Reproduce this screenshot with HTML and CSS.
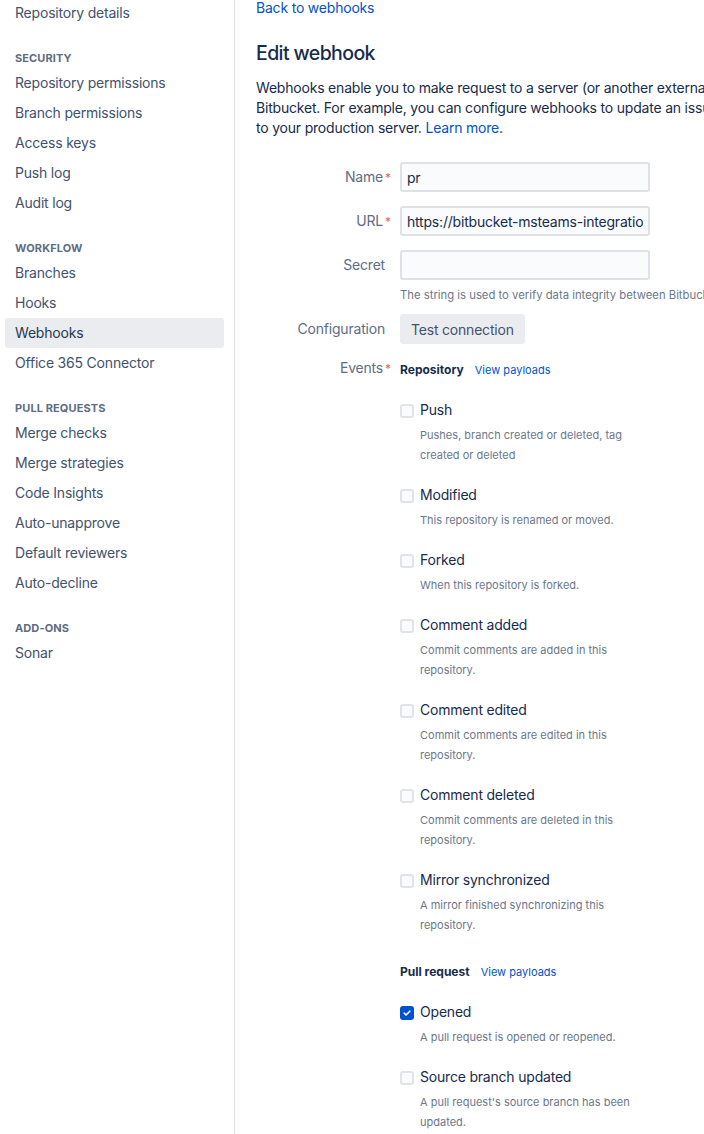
FILE: index.html
```html
<!DOCTYPE html>
<html lang="en">
<head>
<meta charset="utf-8">
<title>Edit webhook</title>
<link rel="stylesheet" href="styles.css">
</head>
<body>
<div class="page">
  <aside class="sidebar">
    <nav class="nav">
      <a class="nav-item">Repository details</a>
      <div class="nav-heading">Security</div>
      <a class="nav-item">Repository permissions</a>
      <a class="nav-item">Branch permissions</a>
      <a class="nav-item">Access keys</a>
      <a class="nav-item">Push log</a>
      <a class="nav-item">Audit log</a>
      <div class="nav-heading">Workflow</div>
      <a class="nav-item">Branches</a>
      <a class="nav-item">Hooks</a>
      <a class="nav-item is-active">Webhooks</a>
      <a class="nav-item">Office 365 Connector</a>
      <div class="nav-heading">Pull requests</div>
      <a class="nav-item">Merge checks</a>
      <a class="nav-item">Merge strategies</a>
      <a class="nav-item">Code Insights</a>
      <a class="nav-item">Auto-unapprove</a>
      <a class="nav-item">Default reviewers</a>
      <a class="nav-item">Auto-decline</a>
      <div class="nav-heading">Add-ons</div>
      <a class="nav-item">Sonar</a>
    </nav>
  </aside>
  <main class="main">
    <a class="back-link">Back to webhooks</a>
    <h1 class="title">Edit webhook</h1>
    <p class="intro">Webhooks enable you to make request to a server (or another external service) when certain events happen in<br>Bitbucket. For example, you can configure webhooks to update an issue tracker, trigger CI builds or deploy<br>to your production server. <a class="link">Learn more</a>.</p>

    <form class="form">
      <div class="row">
        <label class="row-label">Name<span class="req">*</span></label>
        <div class="row-field"><input class="text-input" type="text" value="pr"></div>
      </div>
      <div class="row">
        <label class="row-label">URL<span class="req">*</span></label>
        <div class="row-field"><input class="text-input" type="text" value="https://bitbucket-msteams-integration.example.com/webhook"></div>
      </div>
      <div class="row">
        <label class="row-label">Secret</label>
        <div class="row-field">
          <input class="text-input" type="text" value="">
          <div class="help">The string is used to verify data integrity between Bitbucket and your endpoint.</div>
        </div>
      </div>
      <div class="row row-config">
        <label class="row-label">Configuration</label>
        <div class="row-field"><button class="btn" type="button">Test connection</button></div>
      </div>
      <div class="row row-events">
        <label class="row-label">Events<span class="req">*</span></label>
        <div class="row-field">
          <div class="group">
            <div class="group-head"><span class="group-title">Repository</span><a class="payloads">View payloads</a></div>
            <div class="event">
              <div class="event-line"><span class="cb"></span><span class="event-name">Push</span></div>
              <div class="event-desc">Pushes, branch created or deleted, tag created or deleted</div>
            </div>
            <div class="event">
              <div class="event-line"><span class="cb"></span><span class="event-name">Modified</span></div>
              <div class="event-desc">This repository is renamed or moved.</div>
            </div>
            <div class="event">
              <div class="event-line"><span class="cb"></span><span class="event-name">Forked</span></div>
              <div class="event-desc">When this repository is forked.</div>
            </div>
            <div class="event">
              <div class="event-line"><span class="cb"></span><span class="event-name">Comment added</span></div>
              <div class="event-desc">Commit comments are added in this repository.</div>
            </div>
            <div class="event">
              <div class="event-line"><span class="cb"></span><span class="event-name">Comment edited</span></div>
              <div class="event-desc">Commit comments are edited in this repository.</div>
            </div>
            <div class="event">
              <div class="event-line"><span class="cb"></span><span class="event-name">Comment deleted</span></div>
              <div class="event-desc">Commit comments are deleted in this repository.</div>
            </div>
            <div class="event">
              <div class="event-line"><span class="cb"></span><span class="event-name">Mirror synchronized</span></div>
              <div class="event-desc">A mirror finished synchronizing this repository.</div>
            </div>
          </div>
          <div class="group group-pr">
            <div class="group-head"><span class="group-title">Pull request</span><a class="payloads">View payloads</a></div>
            <div class="event">
              <div class="event-line"><span class="cb is-checked"><svg viewBox="0 0 14 14" width="14" height="14"><path d="M4.2 7.2 L6.1 9 L9.8 5.2" fill="none" stroke="#fff" stroke-width="1.6" stroke-linecap="round" stroke-linejoin="round"/></svg></span><span class="event-name">Opened</span></div>
              <div class="event-desc">A pull request is opened or reopened.</div>
            </div>
            <div class="event">
              <div class="event-line"><span class="cb"></span><span class="event-name">Source branch updated</span></div>
              <div class="event-desc">A pull request's source branch has been updated.</div>
            </div>
          </div>
        </div>
      </div>
    </form>
  </main>
</div>
</body>
</html>
```

FILE: styles.css
```css
* { box-sizing: border-box; }

html, body {
  margin: 0;
  padding: 0;
  background: #fff;
  overflow: hidden;
}

body {
  font-family: Inter, "Noto Sans", "Liberation Sans", sans-serif;
  font-size: 14px;
  letter-spacing: -0.2px;
  color: #172B4D;
}

.page {
  display: flex;
  align-items: stretch;
  min-height: 1140px;
  margin-top: -2px;
}

.sidebar {
  flex: 0 0 235px;
  width: 235px;
  border-right: 1px solid #DFE1E6;
  padding: 0 10px 0 5px;
}

.nav {
  display: flex;
  flex-direction: column;
}

.nav-item {
  display: block;
  height: 30px;
  line-height: 30px;
  padding-left: 10px;
  border-radius: 3px;
  color: #42526E;
  font-size: 14px;
  white-space: nowrap;
}

.nav-item.is-active {
  background: #EBECF0;
  color: #253858;
}

.nav-heading {
  margin-top: 22px;
  margin-bottom: 2px;
  height: 16px;
  line-height: 16px;
  padding-left: 10px;
  font-size: 11px;
  font-weight: 700;
  text-transform: uppercase;
  color: #5E6C84;
  letter-spacing: 0.1px;
}

.main {
  flex: 1 1 auto;
  min-width: 0;
  padding-left: 21px;
  overflow: hidden;
}

.back-link {
  display: block;
  line-height: 20px;
  color: #0052CC;
  white-space: nowrap;
}

.title {
  margin: 23px 0 0;
  font-size: 19.5px;
  line-height: 24px;
  font-weight: 500;
  letter-spacing: -0.6px;
  color: #172B4D;
}

.intro {
  margin: 13px 0 0;
  line-height: 20px;
  white-space: nowrap;
  color: #172B4D;
}

.link {
  color: #0052CC;
}

.form {
  margin-top: 24px;
}

.row {
  display: flex;
  gap: 15px;
  margin-top: 14px;
}

.row:first-child {
  margin-top: 0;
}

.row-config {
  margin-top: 11px;
}

.row-label {
  flex: 0 0 129px;
  height: 30px;
  text-align: right;
  line-height: 30px;
  color: #5E6C84;
  white-space: nowrap;
}

.row-events .row-label {
  height: 20px;
  line-height: 20px;
}

.req {
  display: inline-block;
  width: 0;
  margin-left: 2px;
  color: #E2674A;
  font-size: 12px;
  line-height: 1;
  vertical-align: baseline;
  letter-spacing: 0;
}

.row-field {
  flex: 1 1 auto;
  min-width: 0;
}

.text-input {
  display: block;
  width: 250px;
  height: 30px;
  padding: 0 5px;
  border: 2px solid #DFE1E6;
  border-radius: 3px;
  background: #FAFBFC;
  font-family: inherit;
  font-size: 14px;
  letter-spacing: -0.2px;
  color: #172B4D;
  outline: none;
}

.help {
  margin-top: 7px;
  line-height: 16px;
  font-size: 11.3px;
  letter-spacing: 0;
  color: #6B778C;
  white-space: nowrap;
}

.btn {
  display: block;
  height: 30px;
  padding: 0 11px;
  border: 0;
  border-radius: 3px;
  background: #EBECF0;
  color: #42526E;
  font-family: inherit;
  font-size: 14px;
  letter-spacing: -0.2px;
}

.group-head {
  display: flex;
  align-items: baseline;
  gap: 11px;
  margin-top: 2px;
  line-height: 20px;
  letter-spacing: 0;
}

.group-title {
  font-size: 12px;
  font-weight: 700;
  color: #172B4D;
}

.payloads {
  font-size: 11px;
  color: #0052CC;
}

.group-pr {
  margin-top: 27px;
}

.event {
  margin-top: 20px;
}

.event-line {
  display: flex;
  align-items: flex-start;
  gap: 6px;
  line-height: 20px;
}

.cb {
  flex: 0 0 14px;
  width: 14px;
  height: 14px;
  margin-top: 4px;
  border: 2px solid #E1E3E8;
  border-radius: 3px;
  background: #FAFBFC;
  display: flex;
  align-items: center;
  justify-content: center;
}

.cb.is-checked {
  border: 0;
  background: #0052CC;
}

.event-name {
  font-size: 14px;
  color: #172B4D;
}

.event-desc {
  margin-top: 5px;
  padding-left: 20px;
  max-width: 250px;
  font-size: 11px;
  line-height: 20px;
  letter-spacing: 0;
  color: #6B778C;
}
```
